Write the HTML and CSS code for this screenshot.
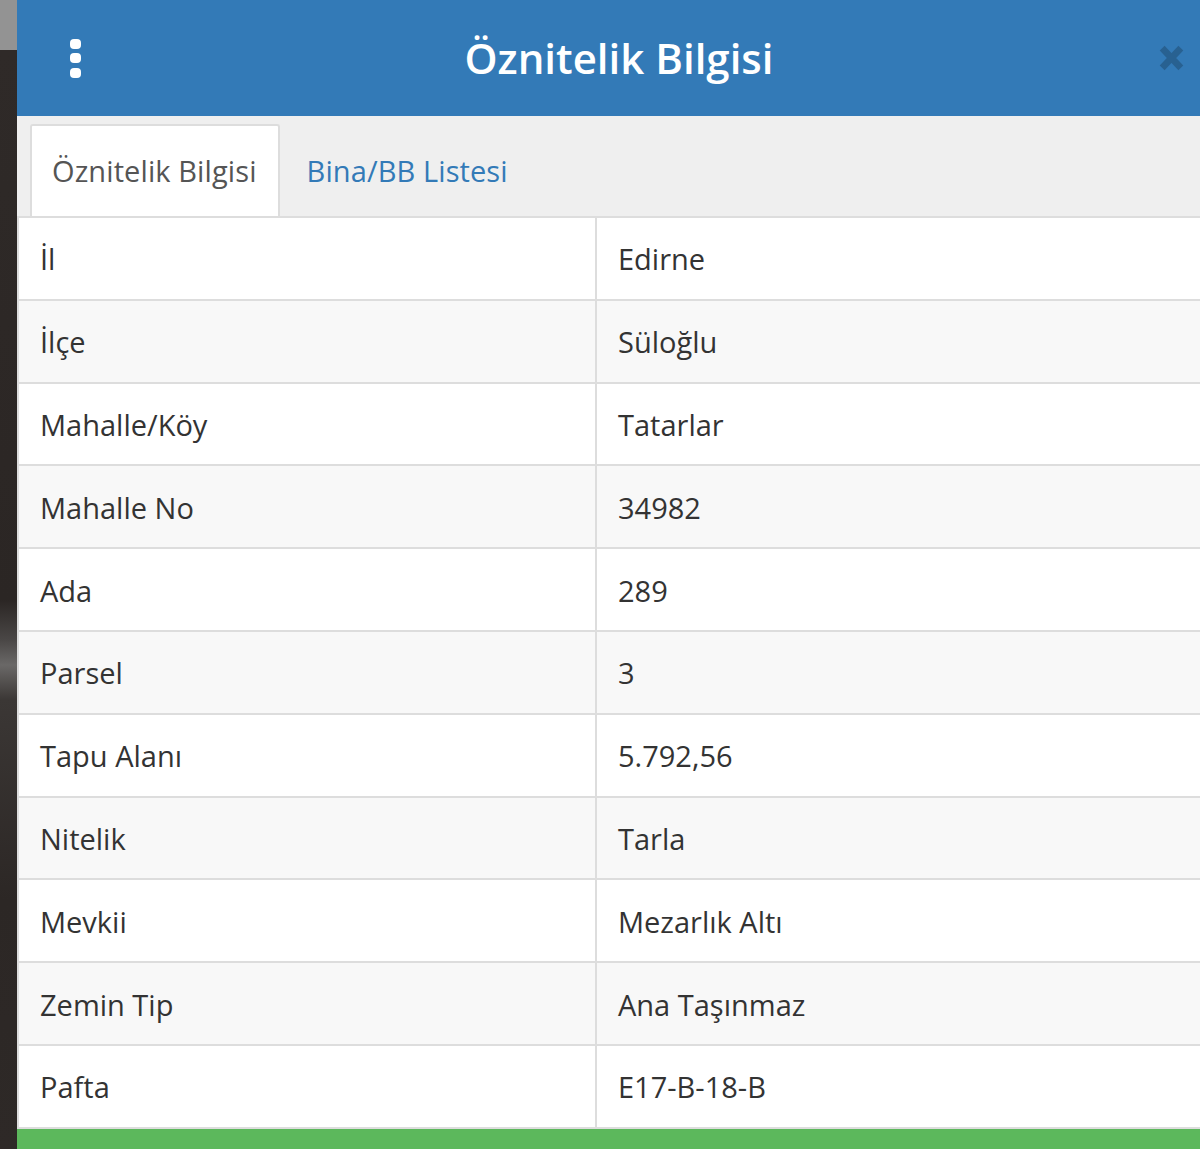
FILE: index.html
```html
<!DOCTYPE html>
<html lang="tr">
<head>
<meta charset="utf-8">
<title>Öznitelik Bilgisi</title>
<link rel="stylesheet" href="styles.css">
</head>
<body>
<div class="page">
  <div class="map-strip"></div>
  <section class="panel">
    <header class="panel-header">
      <div class="menu" aria-label="Menü">
        <span class="dot"></span><span class="dot"></span><span class="dot"></span>
      </div>
      <h1 class="title">Öznitelik Bilgisi</h1>
      <div class="close" aria-label="Kapat">
        <svg class="close-icon" viewBox="0 0 24 27" width="25" height="28">
          <path d="M3 4 L21 23 M21 4 L3 23" />
        </svg>
      </div>
    </header>
    <ul class="tabs">
      <li class="tab active">Öznitelik Bilgisi</li>
      <li class="tab">Bina/BB Listesi</li>
    </ul>
    <div class="attrs">
      <div class="row"><div class="cell key">İl</div><div class="cell val">Edirne</div></div>
      <div class="row"><div class="cell key">İlçe</div><div class="cell val">Süloğlu</div></div>
      <div class="row"><div class="cell key">Mahalle/Köy</div><div class="cell val">Tatarlar</div></div>
      <div class="row"><div class="cell key">Mahalle No</div><div class="cell val">34982</div></div>
      <div class="row"><div class="cell key">Ada</div><div class="cell val">289</div></div>
      <div class="row"><div class="cell key">Parsel</div><div class="cell val">3</div></div>
      <div class="row"><div class="cell key">Tapu Alanı</div><div class="cell val">5.792,56</div></div>
      <div class="row"><div class="cell key">Nitelik</div><div class="cell val">Tarla</div></div>
      <div class="row"><div class="cell key">Mevkii</div><div class="cell val">Mezarlık Altı</div></div>
      <div class="row"><div class="cell key">Zemin Tip</div><div class="cell val">Ana Taşınmaz</div></div>
      <div class="row"><div class="cell key">Pafta</div><div class="cell val">E17-B-18-B</div></div>
    </div>
    <div class="footer-bar"></div>
  </section>
</div>
</body>
</html>
```

FILE: styles.css
```css
* { box-sizing: border-box; }

html, body {
  margin: 0;
  padding: 0;
  width: 1200px;
  height: 1149px;
  overflow: hidden;
  background: #2d2826;
}

.page {
  display: flex;
  width: 1200px;
  height: 1149px;
  overflow: hidden;
  font-family: "Open Sans", "Liberation Sans", sans-serif;
  color: #333;
}

.map-strip {
  flex: 0 0 17px;
  background: linear-gradient(to bottom,
    #939393 0, #939393 50px,
    #2f2a28 50px, #2b2624 600px,
    #4a4746 640px, #6a6867 665px, #3b3735 700px,
    #2c2725 900px, #2e2927 1149px);
}

.panel {
  flex: 0 0 1204px;
  display: flex;
  flex-direction: column;
  background: #fff;
}

/* header */
.panel-header {
  height: 116px;
  background: #337ab7;
  display: grid;
  grid-template-columns: 1fr auto 1fr;
  align-items: center;
  padding: 0 37px;
}

.menu {
  display: flex;
  flex-direction: column;
  gap: 4.5px;
  justify-self: start;
  padding-left: 16px;
}

.dot {
  display: block;
  width: 11px;
  height: 10px;
  border-radius: 4px;
  background: #fff;
}

.title {
  margin: 0;
  font-size: 42px;
  font-weight: 600;
  line-height: 58px;
  color: #fff;
  text-align: center;
}

.close {
  justify-self: end;
  display: flex;
}

.close-icon {
  display: block;
  stroke: #000;
  stroke-width: 6.5;
  stroke-linecap: butt;
  opacity: 0.2;
}

/* tabs */
.tabs {
  list-style: none;
  margin: 0;
  padding: 8px 0 0 13px;
  background: #efefef;
  border-bottom: 2px solid #ddd;
  display: flex;
  align-items: flex-end;
}

.tab {
  font-size: 29px;
  line-height: 42px;
  padding: 24px 21px 24px 20px;
  border: 2px solid transparent;
  border-bottom: 0;
  margin-right: 5px;
  color: #337ab7;
  height: 92px;
  letter-spacing: 0.1px;
}

.tab.active {
  background: #fff;
  color: #555;
  border-color: #ddd;
  border-radius: 3px 3px 0 0;
}

/* attribute table */
.attrs {
  border-left: 2px solid #ddd;
  display: flex;
  flex-direction: column;
}

.row {
  display: grid;
  grid-template-columns: 578px 1fr;
  height: 82.8px;
  border-bottom: 2px solid #ddd;
  background: #fff;
}

.row:nth-child(even) {
  background: #f8f8f8;
}

.cell {
  display: flex;
  align-items: center;
  padding-left: 21px;
  padding-top: 2px;
  font-size: 29px;
  line-height: 42px;
  color: #333;
}

.cell.key {
  border-right: 2px solid #ddd;
}

.footer-bar {
  flex: 1 0 20px;
  background: #5cb85c;
}
```
